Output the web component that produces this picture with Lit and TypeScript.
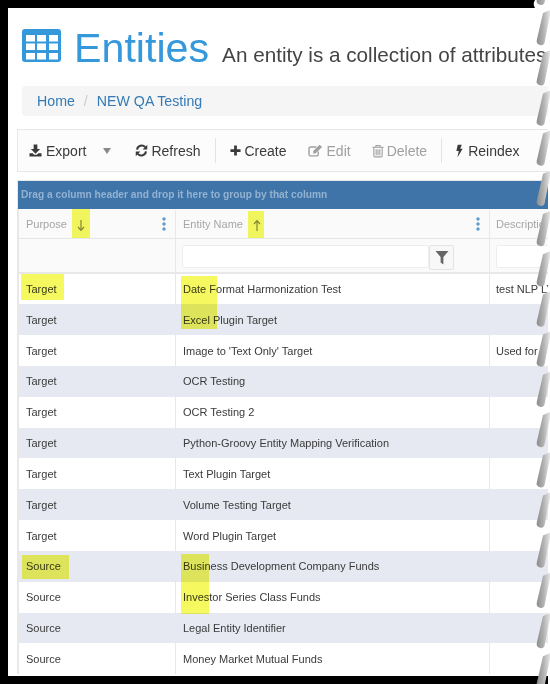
import { LitElement, html, css, svg } from "lit";
import { customElement } from "lit/decorators.js";

const ROWS: [string, string, string][] = [
  ["Target", "Date Format Harmonization Test", "test NLP LY"],
  ["Target", "Excel Plugin Target", ""],
  ["Target", "Image to 'Text Only' Target", "Used for"],
  ["Target", "OCR Testing", ""],
  ["Target", "OCR Testing 2", ""],
  ["Target", "Python-Groovy Entity Mapping Verification", ""],
  ["Target", "Text Plugin Target", ""],
  ["Target", "Volume Testing Target", ""],
  ["Target", "Word Plugin Target", ""],
  ["Source", "Business Development Company Funds", ""],
  ["Source", "Investor Series Class Funds", ""],
  ["Source", "Legal Entity Identifier", ""],
  ["Source", "Money Market Mutual Funds", ""],
];

const i = (w: number, h: number, vb: string, body: unknown) =>
  html`<svg class="ic" width=${w} height=${h} viewBox=${vb} aria-hidden="true">${body}</svg>`;

const ICON_EXPORT = i(13, 13, "0 0 14 14", svg`<path d="M5 0.5h4v5h3L7 10.5 2 5.5h3z" fill="currentColor"/><path d="M0.5 10h3.5l1.5 1.5h3L10 10h3.5v3.5H0.5z" fill="currentColor"/>`);
const ICON_REFRESH = i(13, 13, "0 0 14 14", svg`<path d="M2.2 6A5 5 0 0 1 11 3.4" fill="none" stroke="currentColor" stroke-width="2.2"/><path d="M13.2 0.8v5h-5z" fill="currentColor"/><path d="M11.8 8A5 5 0 0 1 3 10.6" fill="none" stroke="currentColor" stroke-width="2.2"/><path d="M0.8 13.2v-5h5z" fill="currentColor"/>`);
const ICON_PLUS = i(11, 11, "0 0 12 12", svg`<path d="M4.5 0.5h3v4h4v3h-4v4h-3v-4h-4v-3h4z" fill="currentColor"/>`);
const ICON_EDIT = i(15, 13, "0 0 16 14", svg`<path d="M11 8v3a1.8 1.8 0 0 1-1.8 1.8H3A1.8 1.8 0 0 1 1 11V5a1.8 1.8 0 0 1 2-1.8h6" fill="none" stroke="currentColor" stroke-width="1.5"/><path d="M5.5 7.5 12.5 0.7l2.6 2.6L8 10.2H5.5z" fill="currentColor"/>`);
const ICON_TRASH = i(12, 14, "0 0 13 14", svg`<path d="M0.5 3h12" stroke="currentColor" stroke-width="1.2" fill="none"/><path d="M4.3 3V1h4.4v2" stroke="currentColor" stroke-width="1.2" fill="none"/><path d="M2 3.5v8.6c0 .8.5 1.3 1.2 1.3h6.6c.7 0 1.2-.5 1.2-1.3V3.5" stroke="currentColor" stroke-width="1.2" fill="none"/><path d="M4.5 5.2v6.5M6.5 5.2v6.5M8.5 5.2v6.5" stroke="currentColor" stroke-width="1.2" fill="none"/>`);
const ICON_BOLT = i(7, 14, "0 0 8 15", svg`<path d="M2 0.3h4.6L4.8 5H7.6L1.6 14.8 3.2 7.6H0.4z" fill="currentColor"/>`);
const ICON_FILTER = i(14, 15, "0 0 14 15", svg`<path d="M0.5 1h13L8.4 7v7.5L5.6 12.5V7z" fill="currentColor"/>`);
const ICON_TABLE = html`<svg class="tbl" width="39" height="33" viewBox="0 0 39 33" aria-hidden="true"><rect width="39" height="33" rx="3" fill="#3498db"/>${[4, 15, 27].map((x) =>
  [6, 14.5, 24].map((y) => svg`<rect x=${x} y=${y} width="9" height="6.5" fill="#fff"/>`)
)}</svg>`;
const dots = html`<svg class="dots" width="4" height="14" viewBox="0 0 4 14" aria-hidden="true"><circle cx="2" cy="2" r="1.7"/><circle cx="2" cy="7" r="1.7"/><circle cx="2" cy="12" r="1.7"/></svg>`;
const arrowDown = html`<svg class="arrow a1" width="8" height="11" viewBox="0 0 8 11" aria-hidden="true"><path d="M4 0v10M1 7l3 3.4L7 7" fill="none" stroke="currentColor" stroke-width="1.2"/></svg>`;
const arrowUp = html`<svg class="arrow a2" width="8" height="11" viewBox="0 0 8 11" aria-hidden="true"><path d="M4 11V1M1 4l3-3.4L7 4" fill="none" stroke="currentColor" stroke-width="1.2"/></svg>`;

const SLASH_BOTTOMS = Array.from({ length: 18 }, (_, n) => 4.8 + n * 40.2);

@customElement("app-root")
export class AppRoot extends LitElement {
  static styles = css`
    :host { display: block; position: relative; width: 550px; height: 684px; overflow: hidden; background: #000; font-family: "Liberation Sans", Arial, sans-serif; color: #333; }
    .sheet { position: absolute; inset: 8px 0 8px 8px; background: #fff; overflow: hidden; }
    .inner { width: 800px; }
    .head { height: 78px; box-sizing: border-box; padding: 21px 0 0 14px; display: flex; align-items: flex-start; white-space: nowrap; }
    .tbl { flex: none; margin-right: 13px; }
    h1 { margin: -6px 13px 0 0; font-size: 41.2px; line-height: 50px; font-weight: 400; color: #3498db; }
    .sub { font-size: 20.7px; line-height: 26px; color: #444; margin-top: 13px; }
    .crumb { margin-left: 14px; height: 30px; background: #f5f5f5; border-radius: 4px 0 0 4px; padding-left: 15px; display: flex; align-items: center; font-size: 14.2px; color: #337ab7; }
    .crumb .sep { color: #ccc; margin: 0 9px; }
    .toolbar { margin: 13px 0 0 9px; height: 43px; box-sizing: border-box; border: 1px solid #e7e7e7; background: #fcfcfc; display: flex; align-items: center; font-size: 14px; color: #3a3a3a; white-space: nowrap; padding-left: 11px; }
    .btn { display: flex; align-items: center; gap: 4px; }
    .btn.dis { color: #a0a0a0; }
    .g3 { gap: 3px; }
    .g5 { gap: 5px; }
    .ml21 { margin-left: 21px; }
    .ic { flex: none; }
    .caret { width: 0; height: 0; border-left: 4.5px solid transparent; border-right: 4.5px solid transparent; border-top: 6px solid #888; margin: 0 24px 0 17px; }
    .tsep { width: 1px; height: 25px; background: #e4e4e4; margin: 0 14px; flex: none; }
    .grid { margin: 8px 0 0 9px; border-left: 2px solid #e8e8e8; border-top: 1px solid #e8e8e8; font-size: 11px; }
    .group { margin-left: -1px; height: 28px; background: #3f74a8; color: #93b2d2; font-size: 10.2px; font-weight: 700; line-height: 27px; padding-left: 3px; }
    .row { display: grid; grid-template-columns: 157px 314px 320px; }
    .row > div { border-right: 1px solid #e8e8e8; box-sizing: border-box; padding-left: 7px; display: flex; align-items: center; white-space: nowrap; overflow: hidden; }
    .row > div:last-child { padding-left: 6px; }
    .hdr { height: 29.5px; background: #fafafa; color: #a5a5a5; border-bottom: 1px solid #e6e6e6; box-sizing: border-box; padding-top: 1px; }
    .hdr > div { position: relative; }
    .dots { fill: #5b9bd0; position: absolute; right: 9px; top: 7px; }
    .arrow { color: #8a8a8a; position: absolute; top: 10px; }
    .a1 { left: 58px; }
    .a2 { left: 77px; }
    .filter { height: 35px; background: #fafafa; border-bottom: 2px solid #e8e8e8; box-sizing: border-box; }
    .row.filter > div { align-items: flex-start; padding-top: 6.5px; }
    .filter > div:nth-child(2) { padding-left: 6px; }
    .input { width: 247px; height: 23px; box-sizing: border-box; background: #fff; border: 1px solid #eee; border-radius: 2px; flex: none; }
    .fbtn { width: 25px; height: 25px; box-sizing: border-box; border: 1px solid #e4e4e4; border-radius: 2px; background: #f8f8f8; color: #666; display: flex; align-items: center; justify-content: center; flex: none; }
    .data { height: 30.83px; color: #3a3a3a; }
    .data:nth-child(even) { background: #e6e9f1; }
    .marks { position: absolute; inset: 0; pointer-events: none; }
    .mk { position: absolute; background: #f5f95f; mix-blend-mode: multiply; }
    .m1 { left: 72px; top: 209px; width: 18px; height: 29px; }
    .m2 { left: 248px; top: 211px; width: 16px; height: 27px; }
    .m3 { left: 21px; top: 274px; width: 43px; height: 26px; }
    .m4 { left: 181px; top: 276px; width: 36px; height: 53px; }
    .m5 { left: 22px; top: 555px; width: 47px; height: 24px; }
    .m6 { left: 181px; top: 554px; width: 28px; height: 60px; }
    .tear { position: absolute; left: 520px; top: 0; }
  `;

  render() {
    return html`
      <div class="sheet"><div class="inner">
        <div class="head">${ICON_TABLE}<h1>Entities</h1><span class="sub">An entity is a collection of attributes and rules</span></div>
        <div class="crumb"><span>Home</span><span class="sep">/</span><span>NEW QA Testing</span></div>
        <div class="toolbar">
          <span class="btn">${ICON_EXPORT}Export</span><span class="caret"></span>
          <span class="btn g3">${ICON_REFRESH}Refresh</span>
          <span class="tsep"></span>
          <span class="btn">${ICON_PLUS}Create</span>
          <span class="btn dis ml21">${ICON_EDIT}Edit</span>
          <span class="btn dis g3 ml21">${ICON_TRASH}Delete</span>
          <span class="tsep"></span>
          <span class="btn g5">${ICON_BOLT}Reindex</span>
        </div>
        <div class="grid">
          <div class="group">Drag a column header and drop it here to group by that column</div>
          <div class="row hdr">
            <div>Purpose${arrowDown}${dots}</div>
            <div>Entity Name${arrowUp}${dots}</div>
            <div>Description</div>
          </div>
          <div class="row filter">
            <div></div>
            <div><span class="input"></span><span class="fbtn">${ICON_FILTER}</span></div>
            <div><span class="input"></span></div>
          </div>
          <div>
            ${ROWS.map((r) => html`<div class="row data"><div>${r[0]}</div><div>${r[1]}</div><div>${r[2]}</div></div>`)}
          </div>
        </div>
      </div></div>
      <div class="marks">
        <div class="mk m1"></div><div class="mk m2"></div><div class="mk m3"></div>
        <div class="mk m4"></div><div class="mk m5"></div><div class="mk m6"></div>
      </div>
      <svg class="tear" width="30" height="684" viewBox="520 0 30 684" aria-hidden="true">
        <defs>
          <linearGradient id="sl" x1="0" y1="0" x2="1" y2="0">
            <stop offset="0" stop-color="#8c8c8c"/><stop offset="0.5" stop-color="#b0b0b0"/><stop offset="1" stop-color="#e4e4e4"/>
          </linearGradient>
        </defs>
        <rect x="548" y="0" width="2" height="684" fill="#fff"/>
        <path d="M535 0h15v8h-3a6 6 0 0 1-12-8z" fill="#fff"/>
        ${SLASH_BOTTOMS.map((b) => svg`<path d="M543 ${b - 32} L550 ${b - 35} L550 ${b - 30} L544.5 ${b - 2} Q543 ${b + 1} 540 ${b} Q535.5 ${b - 1} 537 ${b - 6} Z" fill="url(#sl)"/>`)}
      </svg>
    `;
  }
}
